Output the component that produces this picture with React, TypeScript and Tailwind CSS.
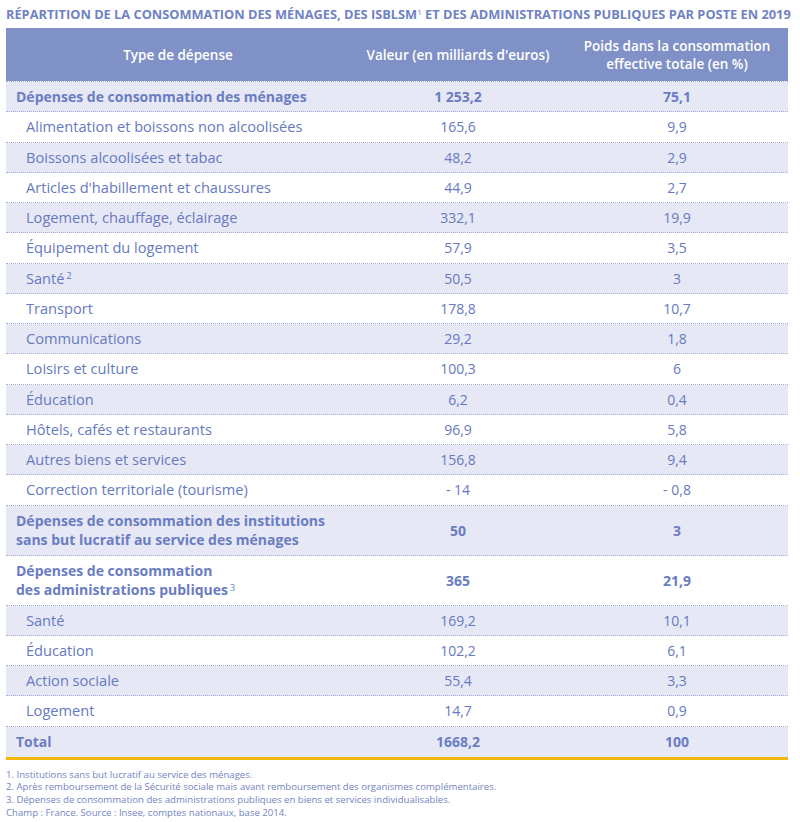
const rows: {
  label: string
  sup?: string
  value: string
  weight: string
  bold?: boolean
  tall?: boolean
}[] = [
  { label: "Dépenses de consommation des ménages", value: "1 253,2", weight: "75,1", bold: true },
  { label: "Alimentation et boissons non alcoolisées", value: "165,6", weight: "9,9" },
  { label: "Boissons alcoolisées et tabac", value: "48,2", weight: "2,9" },
  { label: "Articles d'habillement et chaussures", value: "44,9", weight: "2,7" },
  { label: "Logement, chauffage, éclairage", value: "332,1", weight: "19,9" },
  { label: "Équipement du logement", value: "57,9", weight: "3,5" },
  { label: "Santé", sup: "2", value: "50,5", weight: "3" },
  { label: "Transport", value: "178,8", weight: "10,7" },
  { label: "Communications", value: "29,2", weight: "1,8" },
  { label: "Loisirs et culture", value: "100,3", weight: "6" },
  { label: "Éducation", value: "6,2", weight: "0,4" },
  { label: "Hôtels, cafés et restaurants", value: "96,9", weight: "5,8" },
  { label: "Autres biens et services", value: "156,8", weight: "9,4" },
  { label: "Correction territoriale (tourisme)", value: "- 14", weight: "- 0,8" },
  {
    label: "Dépenses de consommation des institutions\nsans but lucratif au service des ménages",
    value: "50",
    weight: "3",
    bold: true,
    tall: true
  },
  {
    label: "Dépenses de consommation\ndes administrations publiques",
    sup: "3",
    value: "365",
    weight: "21,9",
    bold: true,
    tall: true
  },
  { label: "Santé", value: "169,2", weight: "10,1" },
  { label: "Éducation", value: "102,2", weight: "6,1" },
  { label: "Action sociale", value: "55,4", weight: "3,3" },
  { label: "Logement", value: "14,7", weight: "0,9" }
]

const notes = [
  "1. Institutions sans but lucratif au service des ménages.",
  "2. Après remboursement de la Sécurité sociale mais avant remboursement des organismes complémentaires.",
  "3. Dépenses de consommation des administrations publiques en biens et services individualisables.",
  "Champ : France. Source : Insee, comptes nationaux, base 2014."
]

export default function App() {
  return (
    <div className="min-h-[822px] w-[800px] bg-white px-[6px] pt-[7px] font-['Open_Sans',sans-serif] text-[#6679c1]">
      <h1 className="w-[782px] whitespace-nowrap text-[12.8px] font-bold leading-[15px] text-[#7082c4]">
        RÉPARTITION DE LA CONSOMMATION DES MÉNAGES, DES ISBLSM
        <sup className="text-[8px] font-normal">1</sup> ET DES ADMINISTRATIONS PUBLIQUES PAR POSTE EN 2019
      </h1>

      <div className="mt-[6px] w-[782px]">
        <div className="flex h-[53px] items-center bg-[#7f91c6] text-[13.5px] font-semibold leading-[18px] text-white">
          <div className="w-[344px] text-center">Type de dépense</div>
          <div className="w-[216px] text-center">Valeur (en milliards d'euros)</div>
          <div className="w-[222px] text-center">
            Poids dans la consommation
            <br />
            effective totale (en %)
          </div>
        </div>

        <div className="border-b border-dotted border-[#a3aedb]" />

        {rows.map((row, i) => (
          <div
            key={i}
            className={`flex items-center border-b border-dotted border-[#a3aedb] ${
              row.tall ? "h-[50px]" : "h-[30.25px]"
            } ${i % 2 === 0 ? "bg-[#e6e8f6]" : "bg-white"}`}
          >
            <div
              className={`w-[344px] whitespace-pre-line ${
                row.bold
                  ? "pl-[10px] text-[14px] font-bold leading-[19px] text-[#6a7dc2]"
                  : "pl-[20px] text-[14.6px] leading-[19px]"
              }`}
            >
              {row.label}
              {row.sup && <sup className="ml-[2px] text-[9px] font-normal">{row.sup}</sup>}
            </div>
            <div
              className={`w-[216px] text-center text-[14px] ${
                row.bold ? "font-bold text-[#6a7dc2]" : ""
              }`}
            >
              {row.value}
            </div>
            <div
              className={`w-[222px] text-center text-[14px] ${
                row.bold ? "font-bold text-[#6a7dc2]" : ""
              }`}
            >
              {row.weight}
            </div>
          </div>
        ))}

        <div className="flex h-[30px] items-center bg-[#e6e8f6] text-[#6a7dc2]">
          <div className="w-[344px] pl-[10px] text-[14px] font-bold">Total</div>
          <div className="w-[216px] text-center text-[14px] font-bold">1668,2</div>
          <div className="w-[222px] text-center text-[14px] font-bold">100</div>
        </div>
        <div className="h-[3px] bg-[#f5b800]" />
      </div>

      <div className="mt-[9px] text-[9.6px] leading-[12.7px] text-[#7484c4]">
        {notes.map((n) => (
          <div key={n}>{n}</div>
        ))}
      </div>
    </div>
  )
}
